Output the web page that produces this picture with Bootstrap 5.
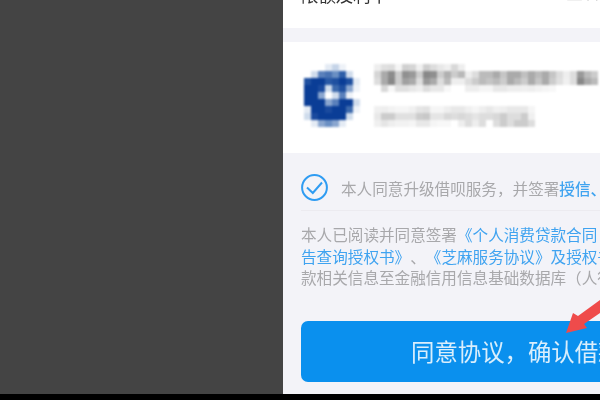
<!DOCTYPE html>
<html lang="zh">
<head>
<meta charset="utf-8">
<title>确认借款</title>
<link href="https://cdn.jsdelivr.net/npm/bootstrap@5.3.0/dist/css/bootstrap.min.css" rel="stylesheet">
<style>
html,body{width:600px;height:400px;margin:0;overflow:hidden;background:#000;font-family:"Noto Sans CJK SC","Liberation Sans",sans-serif;text-spacing-trim:space-all;font-kerning:none}
.shot{height:394px}
.side-dim{width:283px;flex:none;background:#444}
.phone{width:317px;flex:none;background:#f3f3f8;overflow:hidden;position:relative}
.top-strip{height:28px;background:#fff;margin-bottom:14px;overflow:hidden;padding:0 0 0 18px}
.top-title{margin-top:-15px;font-size:17.4px;line-height:20px;color:#333;filter:blur(.5px);white-space:nowrap}
.top-more{margin-top:-18px;font-size:17px;line-height:20px;color:#ccc;filter:blur(.5px)}
.merchant{height:111px;background:#fff;padding:22px 0 0 21px;gap:14px}
.mosaic{display:block;flex:none;filter:blur(.8px)}
.agree-row{padding:22px 0 10px;margin-left:18px;border-bottom:1px solid #ecebf0;gap:13px;height:58px;box-sizing:border-box}
.agree-icon{flex:none;display:block;filter:blur(.3px)}
.agree-text,.terms{font-size:15.6px;color:#a8a8ab;white-space:nowrap;filter:blur(.5px)}
.agree-text{line-height:26px}
.terms{line-height:21.5px;margin:13px 0 0 18px}
.term-link{color:#3fa3f0}
.confirm-btn{display:block;width:400px;height:61px;margin:32px 0 0 18px;padding:0 0 0 110px;border:0;border-radius:7px;background:#0a90ee;color:#d9eefc;text-align:left;font-size:23.4px;line-height:61px;white-space:nowrap}
.confirm-btn span{filter:blur(.4px);display:block}
.pointer{position:absolute;left:0;top:0;pointer-events:none;filter:blur(.3px)}
</style>
</head>
<body>
<div class="shot d-flex">
  <div class="side-dim"></div>
  <main class="phone">
    <div class="top-strip d-flex justify-content-between">
      <div class="top-title">限额及利率</div>
      <div class="top-more">查看</div>
    </div>
    <section class="merchant d-flex align-items-start">
      <svg class="mosaic" width="56" height="63" viewBox="0 0 56 63" aria-hidden="true" shape-rendering="crispEdges">
        <g>
          <rect x="21" y="0" width="7" height="7" fill="#e4ebf4"/><rect x="28" y="0" width="7" height="7" fill="#c5d4e8"/><rect x="35" y="0" width="7" height="7" fill="#eef2f8"/>
          <rect x="7" y="7" width="7" height="7" fill="#d0dcec"/><rect x="14" y="7" width="7" height="7" fill="#5a80bb"/><rect x="21" y="7" width="7" height="7" fill="#4a73b3"/><rect x="28" y="7" width="7" height="7" fill="#6a8fc3"/><rect x="35" y="7" width="7" height="7" fill="#2e5ea8"/><rect x="42" y="7" width="7" height="7" fill="#d0dcec"/>
          <rect x="0" y="14" width="7" height="7" fill="#1f50a0"/><rect x="7" y="14" width="7" height="7" fill="#0a3d96"/><rect x="14" y="14" width="7" height="7" fill="#0a3d96"/><rect x="21" y="14" width="7" height="7" fill="#2a5aa6"/><rect x="28" y="14" width="7" height="7" fill="#1f50a0"/><rect x="35" y="14" width="7" height="7" fill="#0a3d96"/><rect x="42" y="14" width="7" height="7" fill="#1f50a0"/><rect x="49" y="14" width="7" height="7" fill="#e4ebf4"/>
          <rect x="0" y="21" width="7" height="7" fill="#0a3d96"/><rect x="7" y="21" width="7" height="7" fill="#0a3d96"/><rect x="14" y="21" width="7" height="7" fill="#1a4a9e"/><rect x="21" y="21" width="7" height="7" fill="#cfdcec"/><rect x="28" y="21" width="7" height="7" fill="#3d6aad"/><rect x="35" y="21" width="7" height="7" fill="#1f50a0"/><rect x="42" y="21" width="7" height="7" fill="#8aa6cf"/><rect x="49" y="21" width="7" height="7" fill="#eef2f8"/>
          <rect x="0" y="28" width="7" height="7" fill="#0a3d96"/><rect x="7" y="28" width="7" height="7" fill="#0a3d96"/><rect x="14" y="28" width="7" height="7" fill="#8aa6cf"/><rect x="28" y="28" width="7" height="7" fill="#d0dcec"/><rect x="35" y="28" width="7" height="7" fill="#5a80bb"/><rect x="42" y="28" width="7" height="7" fill="#eef2f8"/>
          <rect x="0" y="35" width="7" height="7" fill="#0a3d96"/><rect x="7" y="35" width="7" height="7" fill="#0a3d96"/><rect x="14" y="35" width="7" height="7" fill="#0a3d96"/><rect x="21" y="35" width="7" height="7" fill="#8aa6cf"/><rect x="28" y="35" width="7" height="7" fill="#5a80bb"/><rect x="35" y="35" width="7" height="7" fill="#0a3d96"/><rect x="42" y="35" width="7" height="7" fill="#0a3d96"/><rect x="49" y="35" width="7" height="7" fill="#d0dcec"/>
          <rect x="0" y="42" width="7" height="7" fill="#e4ebf4"/><rect x="7" y="42" width="7" height="7" fill="#0a3d96"/><rect x="14" y="42" width="7" height="7" fill="#0a3d96"/><rect x="21" y="42" width="7" height="7" fill="#1a4a9e"/><rect x="28" y="42" width="7" height="7" fill="#0a3d96"/><rect x="35" y="42" width="7" height="7" fill="#0a3d96"/><rect x="42" y="42" width="7" height="7" fill="#3d6aad"/><rect x="49" y="42" width="7" height="7" fill="#eef2f8"/>
          <rect x="0" y="49" width="7" height="7" fill="#cfdcec"/><rect x="7" y="49" width="7" height="7" fill="#1a4a9e"/><rect x="14" y="49" width="7" height="7" fill="#0a3d96"/><rect x="21" y="49" width="7" height="7" fill="#0a3d96"/><rect x="28" y="49" width="7" height="7" fill="#0a3d96"/><rect x="35" y="49" width="7" height="7" fill="#0a3d96"/><rect x="42" y="49" width="7" height="7" fill="#cfdcec"/>
          <rect x="7" y="56" width="7" height="7" fill="#e4ebf4"/><rect x="14" y="56" width="7" height="7" fill="#8aa6cf"/><rect x="21" y="56" width="7" height="7" fill="#6a8fc3"/><rect x="28" y="56" width="7" height="7" fill="#8aa6cf"/><rect x="35" y="56" width="7" height="7" fill="#e4ebf4"/>
        </g>
      </svg>
      <svg class="mosaic" width="232" height="64" viewBox="0 0 232 64" aria-hidden="true" shape-rendering="crispEdges">
        <g>
          <rect x="0" y="0" width="7" height="7" fill="#eee"/><rect x="7" y="0" width="7" height="7" fill="#e0e0e0"/><rect x="14" y="0" width="7" height="7" fill="#ddd"/><rect x="21" y="0" width="7" height="7" fill="#f5f5f5"/><rect x="28" y="0" width="7" height="7" fill="#d0d0d0"/><rect x="35" y="0" width="7" height="7" fill="#d5d5d5"/><rect x="42" y="0" width="7" height="7" fill="#f0f0f0"/><rect x="49" y="0" width="7" height="7" fill="#cfcfcf"/><rect x="56" y="0" width="7" height="7" fill="#ddd"/><rect x="63" y="0" width="7" height="7" fill="#e8e8e8"/><rect x="70" y="0" width="7" height="7" fill="#f0f0f0"/><rect x="77" y="0" width="7" height="7" fill="#d8d8d8"/><rect x="84" y="0" width="7" height="7" fill="#eee"/>
        </g>
        <g>
          <rect x="0" y="7" width="7" height="7" fill="#d5d5d5"/><rect x="7" y="7" width="7" height="7" fill="#aaa"/><rect x="14" y="7" width="7" height="7" fill="#8c8c8c"/><rect x="21" y="7" width="7" height="7" fill="#ccc"/><rect x="28" y="7" width="7" height="7" fill="#909090"/><rect x="35" y="7" width="7" height="7" fill="#999"/><rect x="42" y="7" width="7" height="7" fill="#ccc"/><rect x="49" y="7" width="7" height="7" fill="#888"/><rect x="56" y="7" width="7" height="7" fill="#8f8f8f"/><rect x="63" y="7" width="7" height="7" fill="#ccc"/><rect x="70" y="7" width="7" height="7" fill="#b0b0b0"/><rect x="77" y="7" width="7" height="7" fill="#ccc"/><rect x="84" y="7" width="7" height="7" fill="#b8b8b8"/><rect x="91" y="7" width="7" height="7" fill="#eee"/><rect x="98" y="7" width="7" height="7" fill="#ddd"/><rect x="105" y="7" width="7" height="7" fill="#bbb"/><rect x="112" y="7" width="7" height="7" fill="#bbb"/><rect x="119" y="7" width="7" height="7" fill="#aaa"/><rect x="126" y="7" width="7" height="7" fill="#c5c5c5"/><rect x="133" y="7" width="7" height="7" fill="#aaa"/><rect x="140" y="7" width="7" height="7" fill="#aaa"/><rect x="147" y="7" width="7" height="7" fill="#c0c0c0"/><rect x="154" y="7" width="7" height="7" fill="#aaa"/><rect x="161" y="7" width="7" height="7" fill="#bbb"/><rect x="168" y="7" width="7" height="7" fill="#aaa"/><rect x="175" y="7" width="7" height="7" fill="#c5c5c5"/><rect x="182" y="7" width="7" height="7" fill="#ddd"/><rect x="189" y="7" width="7" height="7" fill="#eee"/><rect x="196" y="7" width="7" height="7" fill="#ddd"/><rect x="203" y="7" width="7" height="7" fill="#999"/><rect x="210" y="7" width="7" height="7" fill="#bbb"/><rect x="217" y="7" width="7" height="7" fill="#ccc"/>
        </g>
        <g>
          <rect x="0" y="14" width="7" height="7" fill="#ddd"/><rect x="7" y="14" width="7" height="7" fill="#aaa"/><rect x="14" y="14" width="7" height="7" fill="#888"/><rect x="21" y="14" width="7" height="7" fill="#ccc"/><rect x="28" y="14" width="7" height="7" fill="#a0a0a0"/><rect x="35" y="14" width="7" height="7" fill="#aaa"/><rect x="42" y="14" width="7" height="7" fill="#ddd"/><rect x="49" y="14" width="7" height="7" fill="#999"/><rect x="56" y="14" width="7" height="7" fill="#aaa"/><rect x="63" y="14" width="7" height="7" fill="#ddd"/><rect x="70" y="14" width="7" height="7" fill="#bbb"/><rect x="77" y="14" width="7" height="7" fill="#eee"/><rect x="84" y="14" width="7" height="7" fill="#eee"/><rect x="91" y="14" width="7" height="7" fill="#ddd"/><rect x="98" y="14" width="7" height="7" fill="#ccc"/><rect x="105" y="14" width="7" height="7" fill="#bbb"/><rect x="112" y="14" width="7" height="7" fill="#c5c5c5"/><rect x="119" y="14" width="7" height="7" fill="#bbb"/><rect x="126" y="14" width="7" height="7" fill="#ccc"/><rect x="133" y="14" width="7" height="7" fill="#aaa"/><rect x="140" y="14" width="7" height="7" fill="#bbb"/><rect x="147" y="14" width="7" height="7" fill="#ccc"/><rect x="154" y="14" width="7" height="7" fill="#aaa"/><rect x="161" y="14" width="7" height="7" fill="#c5c5c5"/><rect x="168" y="14" width="7" height="7" fill="#aaa"/><rect x="175" y="14" width="7" height="7" fill="#ccc"/><rect x="182" y="14" width="7" height="7" fill="#e0e0e0"/><rect x="189" y="14" width="7" height="7" fill="#f0f0f0"/><rect x="196" y="14" width="7" height="7" fill="#ddd"/><rect x="203" y="14" width="7" height="7" fill="#888"/><rect x="210" y="14" width="7" height="7" fill="#aaa"/><rect x="217" y="14" width="7" height="7" fill="#bbb"/>
        </g>
        <g>
          <rect x="7" y="21" width="7" height="7" fill="#d8d8d8"/><rect x="14" y="21" width="7" height="7" fill="#f8f8f8"/><rect x="21" y="21" width="7" height="7" fill="#e0e0e0"/><rect x="28" y="21" width="7" height="7" fill="#e0e0e0"/><rect x="35" y="21" width="7" height="7" fill="#e8e8e8"/><rect x="42" y="21" width="7" height="7" fill="#eee"/><rect x="49" y="21" width="7" height="7" fill="#ddd"/><rect x="56" y="21" width="7" height="7" fill="#e8e8e8"/><rect x="63" y="21" width="7" height="7" fill="#e8e8e8"/><rect x="70" y="21" width="7" height="7" fill="#f8f8f8"/><rect x="91" y="21" width="7" height="7" fill="#eee"/><rect x="98" y="21" width="7" height="7" fill="#eee"/><rect x="105" y="21" width="7" height="7" fill="#f5f5f5"/><rect x="112" y="21" width="7" height="7" fill="#f5f5f5"/><rect x="119" y="21" width="7" height="7" fill="#e8e8e8"/><rect x="126" y="21" width="7" height="7" fill="#e8e8e8"/><rect x="133" y="21" width="7" height="7" fill="#eee"/><rect x="140" y="21" width="7" height="7" fill="#eee"/><rect x="147" y="21" width="7" height="7" fill="#f0f0f0"/><rect x="154" y="21" width="7" height="7" fill="#eee"/><rect x="161" y="21" width="7" height="7" fill="#f2f2f2"/><rect x="168" y="21" width="7" height="7" fill="#f5f5f5"/><rect x="175" y="21" width="7" height="7" fill="#f8f8f8"/>
        </g>
        <g>
          <rect x="0" y="42" width="7" height="7" fill="#f0f0f0"/><rect x="7" y="42" width="7" height="7" fill="#eee"/><rect x="14" y="42" width="7" height="7" fill="#f2f2f2"/><rect x="21" y="42" width="7" height="7" fill="#f5f5f5"/><rect x="28" y="42" width="7" height="7" fill="#f5f5f5"/><rect x="35" y="42" width="7" height="7" fill="#f0f0f0"/><rect x="42" y="42" width="7" height="7" fill="#e5e5e5"/><rect x="49" y="42" width="7" height="7" fill="#e2e2e2"/><rect x="56" y="42" width="7" height="7" fill="#f5f5f5"/><rect x="63" y="42" width="7" height="7" fill="#f5f5f5"/><rect x="70" y="42" width="7" height="7" fill="#eee"/><rect x="77" y="42" width="7" height="7" fill="#e8e8e8"/><rect x="84" y="42" width="7" height="7" fill="#e8e8e8"/><rect x="91" y="42" width="7" height="7" fill="#f0f0f0"/><rect x="98" y="42" width="7" height="7" fill="#f5f5f5"/><rect x="105" y="42" width="7" height="7" fill="#eee"/><rect x="112" y="42" width="7" height="7" fill="#e8e8e8"/><rect x="119" y="42" width="7" height="7" fill="#f0f0f0"/><rect x="126" y="42" width="7" height="7" fill="#eee"/><rect x="133" y="42" width="7" height="7" fill="#e8e8e8"/><rect x="140" y="42" width="7" height="7" fill="#e8e8e8"/><rect x="147" y="42" width="7" height="7" fill="#e8e8e8"/><rect x="154" y="42" width="7" height="7" fill="#f5f5f5"/>
        </g>
        <g>
          <rect x="0" y="49" width="7" height="7" fill="#e8e8e8"/><rect x="7" y="49" width="7" height="7" fill="#ccc"/><rect x="14" y="49" width="7" height="7" fill="#ccc"/><rect x="21" y="49" width="7" height="7" fill="#e0e0e0"/><rect x="28" y="49" width="7" height="7" fill="#e0e0e0"/><rect x="35" y="49" width="7" height="7" fill="#e0e0e0"/><rect x="42" y="49" width="7" height="7" fill="#ccc"/><rect x="49" y="49" width="7" height="7" fill="#c8c8c8"/><rect x="56" y="49" width="7" height="7" fill="#e5e5e5"/><rect x="63" y="49" width="7" height="7" fill="#e5e5e5"/><rect x="70" y="49" width="7" height="7" fill="#d8d8d8"/><rect x="77" y="49" width="7" height="7" fill="#ddd"/><rect x="84" y="49" width="7" height="7" fill="#d8d8d8"/><rect x="91" y="49" width="7" height="7" fill="#ddd"/><rect x="98" y="49" width="7" height="7" fill="#e5e5e5"/><rect x="105" y="49" width="7" height="7" fill="#ddd"/><rect x="112" y="49" width="7" height="7" fill="#ddd"/><rect x="119" y="49" width="7" height="7" fill="#d8d8d8"/><rect x="126" y="49" width="7" height="7" fill="#ccc"/><rect x="133" y="49" width="7" height="7" fill="#ddd"/><rect x="140" y="49" width="7" height="7" fill="#ddd"/><rect x="147" y="49" width="7" height="7" fill="#ccc"/><rect x="154" y="49" width="7" height="7" fill="#f0f0f0"/>
        </g>
        <g>
          <rect x="0" y="56" width="7" height="7" fill="#f0f0f0"/><rect x="7" y="56" width="7" height="7" fill="#e5e5e5"/><rect x="14" y="56" width="7" height="7" fill="#eee"/><rect x="21" y="56" width="7" height="7" fill="#f2f2f2"/><rect x="28" y="56" width="7" height="7" fill="#f2f2f2"/><rect x="35" y="56" width="7" height="7" fill="#f5f5f5"/><rect x="42" y="56" width="7" height="7" fill="#e8e8e8"/><rect x="49" y="56" width="7" height="7" fill="#e8e8e8"/><rect x="56" y="56" width="7" height="7" fill="#f5f5f5"/><rect x="63" y="56" width="7" height="7" fill="#f8f8f8"/><rect x="70" y="56" width="7" height="7" fill="#f8f8f8"/><rect x="84" y="56" width="7" height="7" fill="#eee"/><rect x="91" y="56" width="7" height="7" fill="#ddd"/><rect x="98" y="56" width="7" height="7" fill="#eee"/><rect x="105" y="56" width="7" height="7" fill="#ddd"/><rect x="119" y="56" width="7" height="7" fill="#ddd"/><rect x="126" y="56" width="7" height="7" fill="#ccc"/><rect x="133" y="56" width="7" height="7" fill="#ddd"/><rect x="140" y="56" width="7" height="7" fill="#ccc"/><rect x="147" y="56" width="7" height="7" fill="#ccc"/><rect x="154" y="56" width="7" height="7" fill="#ddd"/>
        </g>
      </svg>
    </section>
    <div class="agree-row d-flex align-items-center">
      <svg class="agree-icon" width="27" height="27" viewBox="0 0 27 27" aria-hidden="true"><circle cx="13.5" cy="13.5" r="12.4" fill="none" stroke="#2f9cf2" stroke-width="2"/><path d="M6 13.5 11.8 19 21 8.5" fill="none" stroke="#2f9cf2" stroke-width="2"/></svg>
      <div class="agree-text">本人同意升级借呗服务，并签署<span class="term-link fw-medium">授信、</span></div>
    </div>
    <p class="terms">本人已阅读并同意签署<span class="term-link">《个人消费贷款合同</span><br><span class="term-link">告查询授权书》</span>、<span class="term-link">《芝麻服务协议》及授权书</span><br>款相关信息至金融信用信息基础数据库（人行）</p>
    <button type="button" class="btn confirm-btn"><span>同意协议，确认借款</span></button>
    <svg class="pointer" width="317" height="394" viewBox="283 0 317 394" aria-hidden="true"><path d="M566 333 573 313 578 316 600 300V313L584 324 587 328Z" fill="#ef4b4b"/></svg>
  </main>
</div>
<script src="https://cdn.jsdelivr.net/npm/bootstrap@5.3.0/dist/js/bootstrap.bundle.min.js"></script>
</body>
</html>
